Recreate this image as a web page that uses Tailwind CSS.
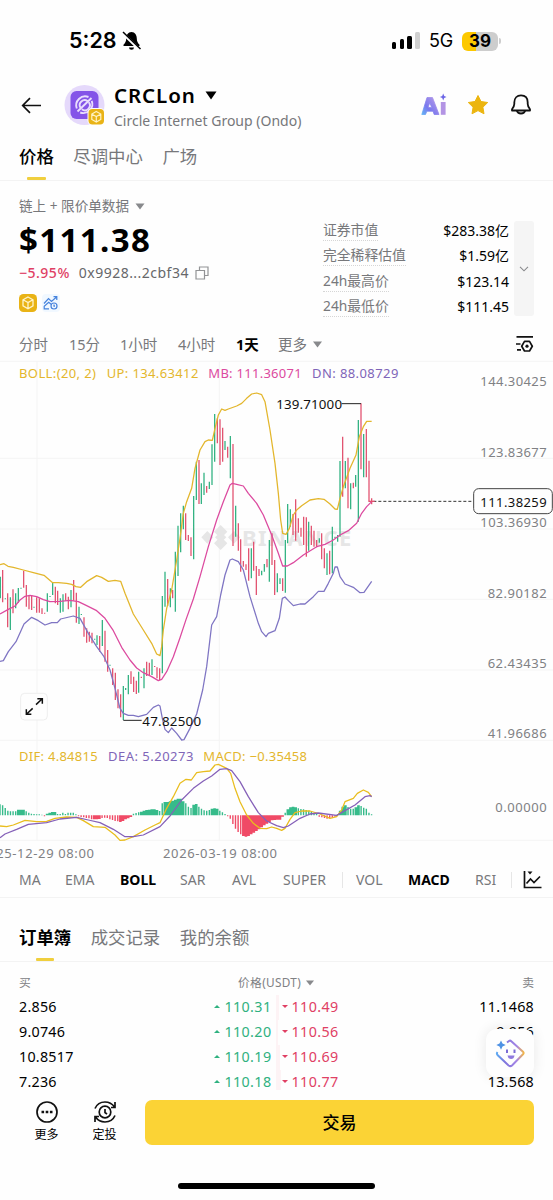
<!DOCTYPE html>
<html lang="zh-CN">
<head>
<meta charset="utf-8">
<title>CRCLon</title>
<script src="https://cdn.jsdelivr.net/npm/@tailwindcss/browser@4"></script>
</head>
<body class="w-[553px] h-[1200px] overflow-hidden bg-[#fefefe] text-black font-['Noto_Sans','Noto_Sans_CJK_SC',sans-serif] text-[14px] leading-none">
<div class="flex flex-col h-[1200px] relative whitespace-nowrap">

  <!-- status bar -->
  <div class="h-[82px] shrink-0 flex items-center pl-[69px] pr-[52px] font-['Inter',sans-serif]">
    <span class="text-[21.5px] font-semibold tracking-[0px]">5:28</span>
    <svg class="ml-[5px]" width="19" height="20" viewBox="0 0 19 20"><path d="M9.5 1C6 1 4.200 4 4.200 7.500c0 3-1 4.500-2.700 6.300V15h16v-1.200c-1.700-1.800-2.700-3.300-2.700-6.300C14.800 4 13 1 9.500 1z"/><path d="M7 16.500h5a2.500 2.200 0 0 1-5 0z"/><path d="M0 1.500 18 19" stroke="#fefefe" stroke-width="3"/><path d="M1 1 18.500 18" stroke="#000" stroke-width="1.500"/></svg>
    <div class="ml-auto flex items-end gap-[3.200px] h-[18px] pb-px">
      <i class="w-[4.500px] h-[7px] rounded-[1.500px] bg-black"></i><i class="w-[4.500px] h-[10px] rounded-[1.500px] bg-black"></i><i class="w-[4.500px] h-[13px] rounded-[1.500px] bg-black"></i><i class="w-[4.500px] h-[17px] rounded-[1.500px] bg-[#d0d0d0]"></i>
    </div>
    <span class="ml-[9.500px] text-[18px] tracking-[-0.2px]">5G</span>
    <div class="ml-[9px] w-[36px] h-[19px] rounded-[6px] bg-[linear-gradient(90deg,#fcc800_40%,#cdcdcd_40%)] flex items-center justify-center text-[17px] font-bold">39</div>
    <i class="ml-[1px] w-[2px] h-[6px] rounded-r bg-[#cdcdcd]"></i>
  </div>

  <!-- header -->
  <div class="h-[46px] shrink-0 flex items-center pl-[21px] pr-[21px]">
    <svg width="21" height="18" viewBox="0 0 21 18" fill="none" stroke="#111" stroke-width="1.700"><path d="M20 9.500H2M9 2.200 1.700 9.500 9 16.800"/></svg>
    <svg class="ml-[22px]" width="42" height="42" viewBox="0 0 42 42"><circle cx="20.500" cy="21" r="20" fill="#e5d9fb"/><rect x="6.500" y="7" width="28" height="28" rx="6" fill="#8454e8"/><g fill="none" stroke="#e9defd" stroke-width="1.900"><path d="M24.500 13a9 9 0 0 0-11.700 11.500M27.700 16.800a9 9 0 0 1-11.500 11.700"/><path d="M23.500 17a5 5 0 0 0-7.200 6.500M17.800 25.300a5 5 0 0 0 7-7M13.500 27.500 27.500 14"/></g><rect x="23.500" y="24" width="17.500" height="17.500" rx="5" fill="#fefefe"/><rect x="24.500" y="25" width="15.500" height="15.500" rx="4" fill="#e9b316"/><path d="m32.300 27.500 4.500 2.500v5.500l-4.500 2.600-4.500-2.600V30zM28 30.200l4.300 2.400 4.300-2.400M32.300 32.600v5" fill="none" stroke="#fff3c4" stroke-width="1.200"/></svg>
    <div class="ml-[8px] mt-[3px] flex flex-col h-[44px] justify-between">
      <div class="flex items-center h-[22px]"><span class="text-[20.5px] font-semibold tracking-[0.9px]">CRCLon</span><svg class="ml-[9px]" width="12" height="9" viewBox="0 0 12 9"><path d="M.5.500h11L6 8.500z"/></svg></div>
      <div class="text-[14px] text-[#76777a] h-[16px] leading-[16px]">Circle Internet Group (Ondo)</div>
    </div>
    <svg class="ml-auto" width="26" height="24" viewBox="0 0 26 24"><defs><linearGradient id="ai" x1="0" y1="1" x2="1" y2="0.200"><stop offset="0" stop-color="#62b5f5"/><stop offset=".4" stop-color="#7a78ee"/><stop offset="1" stop-color="#b79be8"/></linearGradient></defs><path fill="url(#ai)" stroke="url(#ai)" stroke-width=".8" stroke-linejoin="round" fill-rule="evenodd" d="M6 4.500h5.500l6.500 17h-4.800l-1.200-3.300H5.800l-1.300 3.300H.8zM8.800 9.800l-1.800 4.600h3.700z"/><path fill="#b394e4" d="M19.800 9h4.800v12.800h-4.800z"/><path fill="#6c66e6" d="m22.200.500 1 2.500 2.300 1-2.300 1-1 2.500-1-2.500-2.300-1 2.300-1z"/></svg>
    <svg class="ml-[19px]" width="24" height="22" viewBox="0 0 24 22"><path d="m12 1.500 3 6 6.700 1-4.800 4.700 1.100 6.600-6-3.200-6 3.200 1.100-6.600-4.800-4.700 6.700-1z" fill="#ecb50f" stroke="#ecb50f" stroke-linejoin="round"/></svg>
    <svg class="ml-[20px]" width="22" height="22" viewBox="0 0 22 22" fill="none" stroke="#111" stroke-width="1.800"><path d="M4.300 10V8.500C4.300 4 7 1.400 11 1.400s6.700 2.600 6.700 7.100V10c0 2 .5 3 2.300 5.200v1.300H2v-1.300C3.800 13 4.300 12 4.300 10z" stroke-linejoin="round"/><path d="M6.800 16.500a4.300 3.800 0 0 0 8.400 0"/></svg>
  </div>

  <!-- page tabs -->
  <div class="h-[53px] shrink-0 border-b border-[#f3f3f3] flex gap-[19.500px] pl-[19px] pt-[7px] text-[17.4px] text-[#77787b]">
    <div class="relative h-[46px] leading-[43px] text-black font-medium">价格<i class="absolute left-[8px] bottom-[1px] w-[19px] h-[3px] rounded-[1px] bg-[#f0cf3e]"></i></div>
    <div class="leading-[43px]">尽调中心</div><div class="leading-[43px]">广场</div>
  </div>

  <!-- price summary -->
  <div class="h-[144px] shrink-0 flex justify-between pl-[19px] pr-[19px]">
    <div class="pt-[15px]">
      <div class="h-[20px] flex items-center text-[13.6px] text-[#77787b]">链上 + 限价单数据<svg class="ml-[6px]" width="10" height="7" viewBox="0 0 10 7"><path fill="#88898c" d="M.5.500h9L5 6.500z"/></svg></div>
      <div class="mt-[5px] h-[36px] flex items-center text-[33px] font-bold tracking-[1.4px]">$111.38</div>
      <div class="mt-[6px] h-[20px] flex items-center text-[14px]"><span class="text-[#e04064] font-medium tracking-[0.5px]">−5.95%</span><span class="ml-[9px] text-[#66676a] tracking-[0.480px]">0x9928...2cbf34</span><svg class="ml-[6px]" width="14" height="14" viewBox="0 0 14 14" fill="none" stroke="#929395" stroke-width="1.200"><path d="M1 4.500h8.500V13H1zM4.500 4V1H13v8.500h-3"/></svg></div>
      <div class="mt-[11px] flex items-center gap-[5px]">
        <svg width="18" height="18" viewBox="0 0 18 18"><rect width="18" height="18" rx="4.500" fill="#e9b316"/><path d="m9 3 5 2.800v6L9 14.800l-5-3v-6zM4.500 6 9 8.600 13.500 6M9 8.600v6" fill="none" stroke="#fff4cb" stroke-width="1.300"/></svg>
        <svg width="18" height="18" viewBox="0 0 18 18"><rect width="18" height="18" rx="4" fill="#f1f8ff"/><g fill="none" stroke="#4683dd" stroke-width="1.200"><path d="M2 9.500 6.500 4.500l3 3L14.500 3M11.500 2.700h3.300V6M7 14.800H2.200v-2.500l4.500-4 2.500 2"/><circle cx="12" cy="12" r="3"/><path d="M12 10.500v1.700h1"/></g></svg>
      </div>
    </div>
    <div class="flex gap-[5px] pt-[38px]">
      <div class="w-[186px] flex flex-col text-[14px]">
        <div class="h-[25.300px] flex justify-between"><span class="h-[22px] leading-[22px] border-b border-dotted border-[#d6d6d6] text-[#77787b] text-[13.800px]">证券市值</span><span class="leading-[22px] pt-px">$283.38亿</span></div>
        <div class="h-[25.300px] flex justify-between"><span class="h-[22px] leading-[22px] border-b border-dotted border-[#d6d6d6] text-[#77787b] text-[13.800px]">完全稀释估值</span><span class="leading-[22px] pt-px">$1.59亿</span></div>
        <div class="h-[25.300px] flex justify-between"><span class="h-[22px] leading-[22px] border-b border-dotted border-[#d6d6d6] text-[#77787b] text-[13.800px]">24h最高价</span><span class="leading-[22px] pt-px">$123.14</span></div>
        <div class="h-[25.300px] flex justify-between"><span class="h-[22px] leading-[22px] border-b border-dotted border-[#d6d6d6] text-[#77787b] text-[13.800px]">24h最低价</span><span class="leading-[22px] pt-px">$111.45</span></div>
      </div>
      <div class="mt-[2px] w-[20px] h-[95px] rounded-[3px] bg-[#f5f5f5] flex items-center justify-center"><svg width="10" height="6" viewBox="0 0 10 6" fill="none" stroke="#88898c" stroke-width="1.100"><path d="m1 .8 4 4 4-4"/></svg></div>
    </div>
  </div>

  <!-- intervals -->
  <div class="h-[35px] shrink-0 flex items-center pt-[3px] pl-[19px] pr-[19px] text-[14.500px] text-[#77787b]">
    <span class="w-[50px]">分时</span><span class="w-[51px]">15分</span><span class="w-[58px]">1小时</span><span class="w-[58px]">4小时</span><span class="w-[42px] text-black font-bold">1天</span><span>更多</span>
    <svg class="ml-[6px]" width="9" height="7" viewBox="0 0 9 7"><path fill="#88898c" d="M0 .5h9L4.500 6.500z"/></svg>
    <svg class="ml-auto" width="19" height="18" viewBox="0 0 19 18" fill="none" stroke="#111" stroke-width="1.700"><path d="M1.500 1.800h16.500M1 9h4.500M2 14.800h4"/><path d="M9.500 6.400h5l2.800 4.800-2.800 4.800h-5l-2.800-4.800z" stroke-linejoin="round" stroke-width="1.700"/><circle cx="12" cy="11.200" r="1.600" fill="#111" stroke="none"/></svg>
  </div>

  <!-- chart, drawn at three units per pixel -->
  <svg class="shrink-0 block" width="553" height="502" viewBox="0 0 1659 1506" font-size="41">
    <g stroke="#f4f4f4" stroke-width="3"><path d="M0 4H1659M0 295H1659M0 507H1659M0 718H1659M0 930H1659M0 1141H1659M0 1441H1659M111 4V1441M658 4V1441"/></g>
    <g fill="#e6e6e6"><path d="m662 495 20 20-12 12-8-8-8 8-12-12zM622 513l18 19-18 19-18-19zM702 513l18 19-18 19-18-19zM662 515l17 17-17 17-17-17zM662 570l-20-20 12-12 8 8 8-8 12 12z"/><text x="726" y="557" font-size="66" font-weight="700" textLength="328">BINANCE</text></g>
    <path id="up" stroke="#2fb180" stroke-width="3.800" fill="none"/>
    <path id="down" stroke="#e2506e" stroke-width="3.800" fill="none"/>
    <path id="macdUp" fill="#36bb8a"/><path id="macdDown" fill="#f04a66"/>
    <g fill="none" stroke-width="3.800" stroke-linejoin="round">
      <polyline stroke="#e3b62c" points="0,614 12,611 24,619 40,622 70,630 100,638 132,646 158,668 175,668 200,670 215,673 228,680 242,682 260,665 290,647 305,652 325,664 345,661 362,664 375,700 400,762 430,810 455,850 470,882 480,887 485,860 490,810 500,745 515,690 530,600 540,535 550,460 560,425 575,385 585,325 600,270 615,245 625,240 637,241 645,205 655,165 665,147 675,151 685,147 710,138 725,130 740,115 755,102 770,99 785,104 795,125 810,210 825,310 835,400 842,480 848,520 858,523 868,505 880,465 890,450 905,437 930,420 955,416 972,418 990,432 1005,447 1012,448 1020,415 1030,380 1050,325 1068,285 1078,230 1090,200 1100,184 1115,184"/>
      <polyline stroke="#dc4a9f" points="0,762 25,748 45,738 60,720 75,709 90,706 110,710 130,719 150,725 180,724 210,721 235,725 260,737 290,752 315,775 340,812 365,862 390,900 410,924 430,938 455,950 475,962 485,958 500,935 520,890 540,833 558,779 580,717 600,650 625,560 650,480 670,425 690,375 697,370 710,373 730,378 745,400 770,430 790,465 815,525 835,580 848,618 862,618 880,608 910,585 950,560 975,553 1000,540 1020,525 1045,512 1070,490 1085,460 1100,440 1115,425"/>
      <polyline stroke="#7f75c3" points="0,904 10,902 25,875 48,845 72,792 95,772 115,782 135,795 155,788 172,788 182,777 220,768 240,775 265,820 290,860 312,890 330,930 345,985 360,1045 370,1060 385,1066 400,1066 415,1070 440,1063 460,1042 475,1035 480,1038 487,1075 495,1108 505,1118 515,1104 530,1120 545,1140 552,1139 570,1105 590,1062 608,990 620,920 635,795 650,770 662,705 675,645 690,600 697,597 715,605 730,630 750,710 775,790 785,815 798,830 805,820 825,812 838,775 847,715 855,711 865,722 880,737 900,732 915,732 940,710 955,694 972,694 985,670 1000,640 1005,621 1012,621 1020,650 1035,672 1060,682 1080,698 1092,697 1115,664"/>
      <polyline stroke="#e9bd1e" points="0,1398 20,1400 40,1395 75,1381 110,1385 140,1384 165,1375 200,1371 230,1372 250,1382 280,1400 315,1402 345,1425 360,1441 375,1440 400,1430 435,1410 465,1395 480,1388 500,1345 520,1310 540,1270 558,1258 574,1260 590,1238 610,1235 630,1233 645,1215 655,1213 680,1225 692,1240 705,1285 720,1325 740,1365 760,1390 780,1405 800,1406 815,1401 830,1405 845,1411 855,1405 870,1378 885,1358 905,1353 930,1353 960,1362 990,1375 1010,1370 1025,1350 1035,1325 1060,1315 1072,1300 1090,1290 1105,1297 1115,1310"/>
      <polyline stroke="#8560b8" points="0,1433 15,1422 50,1408 85,1393 140,1388 180,1377 230,1372 265,1380 300,1388 340,1408 375,1430 400,1430 430,1425 480,1400 510,1368 545,1320 580,1285 610,1263 635,1248 660,1228 680,1226 695,1232 720,1265 745,1310 775,1358 800,1383 830,1397 850,1403 865,1398 900,1375 930,1362 955,1359 1010,1366 1035,1352 1065,1335 1095,1310 1110,1307 1115,1310"/>
    </g>
    <path d="M1025 131H1083M370 1081H425" stroke="#222" stroke-width="3"/>
    <path d="M1120 424H1420" stroke="#333" stroke-width="3" stroke-dasharray="9 6"/>
    <path d="M1106 424h18" stroke="#e2506e" stroke-width="4"/>
    <text x="829" y="146" font-size="40" textLength="197" fill="#111">139.71000</text>
    <text x="427" y="1098" font-size="40" textLength="176" fill="#111">47.82500</text>
    <g font-size="39">
    <g fill="#e3b62c"><text x="57" y="54" textLength="231">BOLL:(20, 2)</text><text x="320" y="54" textLength="275">UP: 134.63412</text><text x="57" y="1202" textLength="236">DIF: 4.84815</text><text x="610" y="1202" textLength="311">MACD: −0.35458</text></g>
    <text x="625" y="54" textLength="280" fill="#dc4a9f">MB: 111.36071</text>
    <g fill="#7f65b8"><text x="936" y="54" textLength="259">DN: 88.08729</text><text x="324" y="1202" textLength="256">DEA: 5.20273</text></g>
    <g fill="#808184"><text x="1441" y="78" textLength="199">144.30425</text><text x="1441" y="290" textLength="199">123.83677</text><text x="1441" y="501" textLength="199">103.36930</text><text x="1463" y="713" textLength="177">82.90182</text><text x="1463" y="924" textLength="177">62.43435</text><text x="1463" y="1133" textLength="177">41.96686</text><text x="1486" y="1357" textLength="154">0.00000</text><text x="-60" y="1493" textLength="342">2025-12-29 08:00</text><text x="489" y="1493" textLength="342">2026-03-19 08:00</text></g>
    <rect x="1421" y="386" width="236" height="75" rx="15" fill="#fefefe" stroke="#444" stroke-width="3"/>
    <text x="1441" y="440" textLength="199" fill="#111">111.38259</text>
    </g>
    <rect x="62" y="1000" width="80" height="80" rx="12" fill="#fefefe" stroke="#eee" stroke-width="3"/>
    <path d="M80 1062 98 1045M108 1034l18-17M79 1048v15h15M112 1016h15v15" fill="none" stroke="#111" stroke-width="4.500"/>
  </svg>

  <!-- indicators -->
  <div class="h-[36px] shrink-0 border-b border-[#f3f3f3] flex items-center pl-[19px] pr-[11px] text-[14px] text-[#77787b]">
    <span class="w-[46px]">MA</span><span class="w-[55px]">EMA</span><span class="w-[60px] text-black font-bold">BOLL</span><span class="w-[52px]">SAR</span><span class="w-[51px]">AVL</span><span class="w-[59px]">SUPER</span>
    <i class="w-px h-[16px] bg-[#e6e6e6]"></i><span class="ml-[13px] w-[52px]">VOL</span><span class="w-[67px] text-black font-bold">MACD</span><span class="w-[36px]">RSI</span><i class="w-px h-[16px] bg-[#e6e6e6]"></i>
    <svg class="ml-auto" width="19" height="19" viewBox="0 0 19 19" fill="none" stroke="#111" stroke-width="1.700"><path d="M1.500 1v16.500h17M3.500 13.500l4-4.500 3.500 3.500 6-6"/><path d="M4.500 1.500h5L7 4.500z" fill="#111" stroke="none"/></svg>
  </div>

  <!-- order tabs -->
  <div class="h-[64px] shrink-0 border-b border-[#f3f3f3] flex gap-[19.500px] pl-[19px] pt-[17px] text-[17.400px] text-[#77787b]">
    <div class="relative h-[46px] leading-[44px] text-black font-bold">订单簿<i class="absolute left-[17px] bottom-0 w-[18px] h-[3px] rounded-[1px] bg-[#f0cf3e]"></i></div>
    <div class="leading-[44px]">成交记录</div><div class="leading-[44px]">我的余额</div>
  </div>

  <!-- order book -->
  <div class="relative h-[128px] shrink-0 px-[19px] pt-[9px]">
    <div class="h-[24px] flex items-center justify-between text-[11.800px] text-[#808184]"><span>买</span><span class="flex items-center mr-[1px] tracking-[0.300px]">价格(USDT)<svg class="ml-[5px]" width="8" height="6" viewBox="0 0 8 6"><path fill="#88898c" d="M0 .5h8L4 5.500z"/></svg></span><span>卖</span></div>
    <div class="grid grid-cols-[1fr_62px_6px_66px_1fr] items-center auto-rows-[25px] text-[14.300px] tracking-[0.250px]">
      <span>2.856</span><span class="text-right text-[#2fb180] tracking-[0.400px]"><b class="inline-block align-[4px] mr-[4px] border-x-[3px] border-x-transparent border-b-[3px] border-b-[#2fb180]"></b>110.31</span><i class="w-[3px] h-full ml-[4px] bg-[#fdf3f5]"></i><span class="pl-[4px] text-[#e04064] tracking-[0.400px]"><b class="inline-block align-[4px] mr-[4px] border-x-[3px] border-x-transparent border-t-[3px] border-t-[#e04064]"></b>110.49</span><span class="text-right">11.1468</span>
      <span>9.0746</span><span class="text-right text-[#2fb180] tracking-[0.400px]"><b class="inline-block align-[4px] mr-[4px] border-x-[3px] border-x-transparent border-b-[3px] border-b-[#2fb180]"></b>110.20</span><i class="w-[2px] h-full ml-[4px] bg-[#fdf3f5]"></i><span class="pl-[4px] text-[#e04064] tracking-[0.400px]"><b class="inline-block align-[4px] mr-[4px] border-x-[3px] border-x-transparent border-t-[3px] border-t-[#e04064]"></b>110.56</span><span class="text-right">9.956</span>
      <span>10.8517</span><span class="text-right text-[#2fb180] tracking-[0.400px]"><b class="inline-block align-[4px] mr-[4px] border-x-[3px] border-x-transparent border-b-[3px] border-b-[#2fb180]"></b>110.19</span><i class="w-[4px] h-full ml-[4px] bg-[#fdf3f5]"></i><span class="pl-[4px] text-[#e04064] tracking-[0.400px]"><b class="inline-block align-[4px] mr-[4px] border-x-[3px] border-x-transparent border-t-[3px] border-t-[#e04064]"></b>110.69</span><span></span>
      <span>7.236</span><span class="text-right text-[#2fb180] tracking-[0.400px]"><b class="inline-block align-[4px] mr-[4px] border-x-[3px] border-x-transparent border-b-[3px] border-b-[#2fb180]"></b>110.18</span><i class="w-[5px] h-[20px] self-start ml-[4px] bg-[#fdf3f5]"></i><span class="pl-[4px] text-[#e04064] tracking-[0.400px]"><b class="inline-block align-[4px] mr-[4px] border-x-[3px] border-x-transparent border-t-[3px] border-t-[#e04064]"></b>110.77</span><span class="text-right">13.568</span>
    </div>
    <!-- assistant button -->
    <div class="absolute left-[486px] top-[67px] w-[48px] h-[48px] rounded-[11px] bg-[#fefefe] shadow-[0_0_14px_rgba(0,0,0,0.09)] flex items-center justify-center">
      <svg width="30" height="30" viewBox="0 0 30 30"><defs><linearGradient id="face" x1="0" x2="1"><stop offset="0" stop-color="#5faaf2"/><stop offset=".3" stop-color="#7f74dc"/><stop offset=".75" stop-color="#a685e6"/><stop offset="1" stop-color="#f2b548"/></linearGradient></defs><path d="m12 4.500 2-1.500q1.200-.8 2.300.2L28 13.700q1.200 1.300 0 2.600L17 27.500q-1.700 1.300-3.400 0L2.500 17q-1.200-1.500 0-3" fill="none" stroke="url(#face)" stroke-width="2"/><path fill="#4e92e4" d="m6 2.500 1.500 3 3.200 1.500-3.200 1.500-1.500 3.300-1.500-3.300L1.300 7l3.200-1.500z"/><path d="M12 11.500v3.500M19.500 11.500v3.500" stroke="#7a6bd6" stroke-width="2"/><path d="M12.500 17.500h7q-.5 3.500-3.500 3.500t-3.500-3.500z" fill="#8f79de"/></svg>
    </div>
  </div>

  <!-- bottom bar -->
  <div class="h-[60px] shrink-0 flex pl-[19px] pr-[19px] pt-[10px] text-[12px]">
    <div class="w-[55px] flex flex-col items-center"><svg width="24" height="24" viewBox="0 0 24 24" fill="none" stroke="#111" stroke-width="1.700"><circle cx="12" cy="12" r="10"/><path d="M6.500 12h2.600M10.700 12h2.600M14.900 12h2.600" stroke-width="2.400"/></svg><span class="mt-[5px]">更多</span></div>
    <div class="ml-[3px] w-[55px] flex flex-col items-center"><svg width="24" height="24" viewBox="0 0 24 24" fill="none" stroke="#111" stroke-width="1.700"><circle cx="12" cy="12" r="5.800"/><path d="M12 9v3.500l2 1.700"/><path d="M2 8.500C4 4 7.500 2 12 2c4 0 7 1.500 9.500 5M22 2v5.500h-4M22 15.500C20 20 16.500 22 12 22c-4 0-7-1.500-9.500-5M2 22v-5.500h4"/></svg><span class="mt-[5px]">定投</span></div>
    <div class="ml-auto w-[389px] h-[45px] rounded-[7px] bg-[#fbd335] flex items-center justify-center text-[17px] font-medium">交易</div>
  </div>
  <div class="mx-auto mt-[33px] w-[197px] h-[6px] rounded-full bg-black"></div>
</div>

<script>
// x, high, low per candle
const rising = [[1,650,715],[16,715,718],[31,712,810],[47,700,745],[55,684,728],[63,683,686],[102,740,743],[142,700,755],[150,708,711],[158,668,705],[181,715,758],[189,703,755],[213,690,742],[237,740,792],[244,762,765],[284,836,839],[291,826,855],[307,780,858],[330,914,917],[370,978,1080],[377,984,990],[385,945,1003],[416,935,998],[432,925,985],[456,898,945],[487,708,940],[495,635,740],[511,685,742],[526,575,755],[534,497,648],[542,460,577],[550,437,508],[581,408,598],[589,305,420],[604,370,432],[612,338,405],[628,365,387],[636,253,375],[644,162,305],[675,243,270],[691,228,355],[707,437,530],[754,565,655],[785,632,646],[793,612,635],[808,540,665],[832,640,697],[840,655,672],[856,540,698],[863,432,550],[871,448,500],[926,485,572],[958,535,548],[981,580,645],[997,500,640],[1005,530,534],[1013,525,545],[1020,303,530],[1036,303,385],[1052,370,448],[1067,345,380],[1075,180,485],[1091,222,352]];
const falling = [[8,630,727],[23,700,802],[39,688,760],[71,632,683],[79,675,740],[87,705,748],[95,705,750],[110,712,758],[118,715,758],[126,745,762],[134,758,761],[166,680,730],[173,692,735],[197,700,722],[205,710,748],[221,660,722],[229,698,788],[252,772,830],[260,805,848],[268,815,845],[276,818,850],[299,828,875],[315,812,905],[323,870,935],[338,925,975],[346,938,1020],[354,988,1045],[362,1003,1072],[393,934,972],[401,950,996],[409,962,1002],[424,950,954],[440,905,948],[448,908,945],[464,918,921],[471,922,955],[479,925,960],[503,657,738],[518,690,715],[557,460,540],[565,525,543],[573,532,588],[597,300,432],[620,378,398],[652,175,250],[660,178,315],[668,203,305],[683,260,293],[699,252,558],[715,490,572],[722,538,635],[730,603,620],[738,613,630],[746,565,662],[761,545,632],[769,618,705],[777,627,648],[801,597,622],[816,520,615],[824,600,705],[848,655,693],[879,462,525],[887,418,542],[895,475,518],[903,503,530],[911,470,555],[919,472,590],[934,497,555],[942,512,560],[950,540,562],[965,520,598],[973,565,625],[989,572,643],[1028,230,410],[1044,293,445],[1060,368,385],[1083,130,328],[1099,207,352],[1107,302,425],[1115,415,433]];
const bars = a => a.map(([x, h, l]) => `M${x} ${h}V${l}`).join('');
document.getElementById('up').setAttribute('d', bars(rising));
document.getElementById('down').setAttribute('d', bars(falling));

// histogram heights, one per candle
const hist = [33,30,22,14,12,12,12,17,17,17,12,8,5,4,3,3,2,-3,5,8,10,10,4,4,8,4,8,8,8,3,-3,-5,-6,-8,-9,-12,-12,-12,-11,-8,-7,-8,-12,-14,-17,-18,-20,-17,-12,-9,-5,5,7,9,11,14,16,17,18,18,16,13,36,40,40,42,44,47,50,50,42,36,26,22,32,34,26,20,15,14,16,20,21,20,14,9,4,-3,-10,-26,-40,-50,-57,-62,-64,-62,-57,-52,-47,-42,-36,-30,-25,-20,-15,-14,-13,-13,-4,8,18,24,26,24,21,19,18,16,14,10,7,5,-4,-6,-8,-10,-9,-7,-4,4,14,26,30,25,20,20,24,30,28,23,20,8,3];
const solid = [[52,74],[138,168],[278,302],[360,397],[420,478],[488,555],[578,592],[632,657],[728,852],[858,892],[1018,1040],[1067,1083]];
let pos = '', neg = '';
hist.forEach((v, i) => {
  const x = i * 7.85, w = solid.some(([a, b]) => x >= a && x <= b) ? 7.85 : 4.2;
  const s = `M${x - w / 2} 1366h${w}v${-v}h${-w}z`;
  if (v > 0) pos += s; else neg += s;
});
document.getElementById('macdUp').setAttribute('d', pos);
document.getElementById('macdDown').setAttribute('d', neg);
</script>
</body>
</html>
